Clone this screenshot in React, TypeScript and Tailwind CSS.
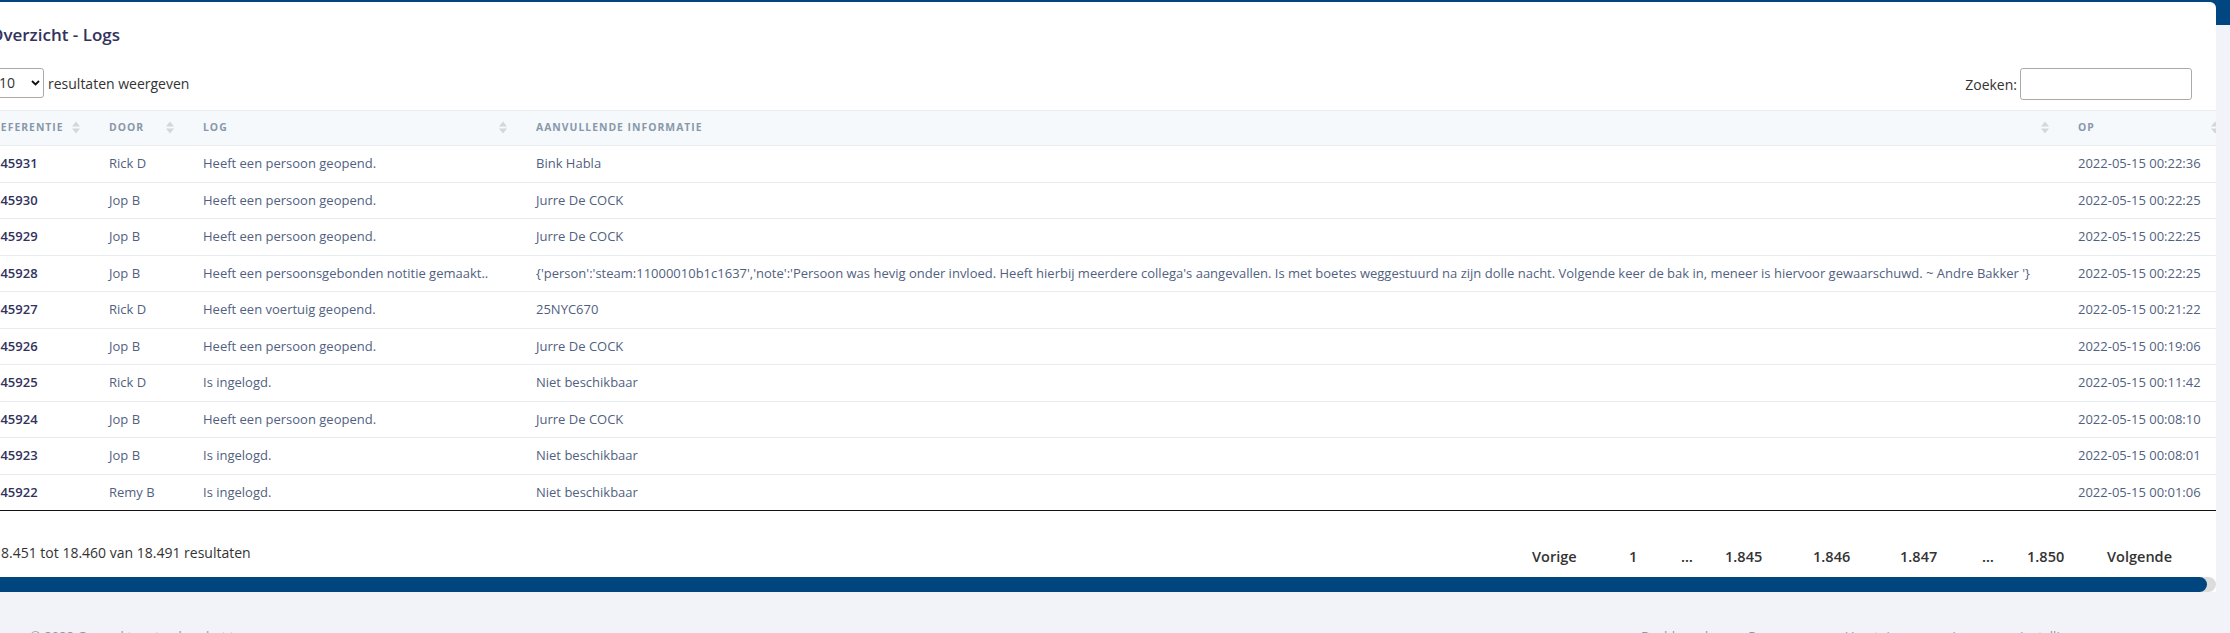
import React from "react";

interface LogRow {
  ref: string;
  door: string;
  log: string;
  info: string;
  op: string;
}

const NOTE =
  "{'person':'steam:11000010b1c1637','note':'Persoon was hevig onder invloed. Heeft hierbij meerdere collega's aangevallen. Is met boetes weggestuurd na zijn dolle nacht. Volgende keer de bak in, meneer is hiervoor gewaarschuwd. ~ Andre Bakker '}";

const rows: LogRow[] = [
  { ref: "145931", door: "Rick D", log: "Heeft een persoon geopend.", info: "Bink Habla", op: "2022-05-15 00:22:36" },
  { ref: "145930", door: "Jop B", log: "Heeft een persoon geopend.", info: "Jurre De COCK", op: "2022-05-15 00:22:25" },
  { ref: "145929", door: "Jop B", log: "Heeft een persoon geopend.", info: "Jurre De COCK", op: "2022-05-15 00:22:25" },
  { ref: "145928", door: "Jop B", log: "Heeft een persoonsgebonden notitie gemaakt..", info: NOTE, op: "2022-05-15 00:22:25" },
  { ref: "145927", door: "Rick D", log: "Heeft een voertuig geopend.", info: "25NYC670", op: "2022-05-15 00:21:22" },
  { ref: "145926", door: "Jop B", log: "Heeft een persoon geopend.", info: "Jurre De COCK", op: "2022-05-15 00:19:06" },
  { ref: "145925", door: "Rick D", log: "Is ingelogd.", info: "Niet beschikbaar", op: "2022-05-15 00:11:42" },
  { ref: "145924", door: "Jop B", log: "Heeft een persoon geopend.", info: "Jurre De COCK", op: "2022-05-15 00:08:10" },
  { ref: "145923", door: "Jop B", log: "Is ingelogd.", info: "Niet beschikbaar", op: "2022-05-15 00:08:01" },
  { ref: "145922", door: "Remy B", log: "Is ingelogd.", info: "Niet beschikbaar", op: "2022-05-15 00:01:06" },
];

// pagination items with the spacing of the original buttons
const pages = [
  { label: "Vorige", w: "w-[97px]" },
  { label: "1", w: "w-[52px]" },
  { label: "…", w: "w-[44px]" },
  { label: "1.845", w: "w-[88px]" },
  { label: "1.846", w: "w-[87px]" },
  { label: "1.847", w: "w-[82px]" },
  { label: "…", w: "w-[45px]" },
  { label: "1.850", w: "w-[80px]" },
  { label: "Volgende", w: "" },
];

// DataTables "sort both" arrows
const SortIcon = () => (
  <svg width="8" height="13" viewBox="0 0 8 13" className="shrink-0">
    <path d="M0 5.5 L4 0.5 L8 5.5 Z" fill="#d6d6d6" />
    <path d="M0 7.5 L4 12.5 L8 7.5 Z" fill="#d6d6d6" />
  </svg>
);

const HeadCell = ({ label }: { label: string }) => (
  <th className="h-[35px] pl-[24px] pr-[5px] p-0 text-left align-middle font-bold">
    <div className="flex items-center justify-between">
      <span>{label}</span>
      <SortIcon />
    </div>
  </th>
);

const App: React.FC = () => {
  return (
    <div className="w-[2230px] h-[633px] overflow-hidden bg-[#f2f3f8] font-['Open_Sans',sans-serif]">
      {/* blue header band */}
      <div className="h-[25px] bg-[#004680]" />

      {/* card */}
      <div className="-mt-[23px] -ml-[40px] w-[2256px] overflow-hidden rounded-tr-md bg-white">
        <h3 className="pl-[30px] pt-[20px] text-[17px] leading-[25px] font-semibold text-[#32325d]">
          Overzicht - Logs
        </h3>

        {/* length + filter */}
        <div className="mt-[21px] flex items-start justify-between pl-[34px] pr-[24px] text-[14px] text-[#333]">
          <label className="flex items-center gap-[4px]">
            <span className="flex h-[30px] w-[50px] items-center justify-between rounded-[3px] border border-[#aaa] bg-white pl-[4px] pr-[3px] leading-none">
              <span>10</span>
              <svg width="9" height="6" viewBox="0 0 9 6">
                <path d="M1 1 L4.5 4.5 L8 1" fill="none" stroke="#111" strokeWidth="1.8" />
              </svg>
            </span>
            <span>resultaten weergeven</span>
          </label>
          <label className="flex items-center gap-[3px]">
            <span>Zoeken:</span>
            <span className="block h-[32px] w-[172px] rounded-[3px] border border-[#aaa] bg-white" />
          </label>
        </div>

        {/* table */}
        <div className="ml-[9px] mt-[10px]">
          <table className="w-[2255px] table-fixed border-b border-[#111] whitespace-nowrap">
            <colgroup>
              <col className="w-[116px]" />
              <col className="w-[94px]" />
              <col className="w-[333px]" />
              <col className="w-[1542px]" />
              <col className="w-[170px]" />
            </colgroup>
            <thead>
              <tr className="border-y border-[#e9ecef] bg-[#f6f9fc] text-[10.4px] uppercase tracking-[1px] text-[#8898aa]">
                <HeadCell label="Referentie" />
                <HeadCell label="Door" />
                <HeadCell label="Log" />
                <HeadCell label="Aanvullende informatie" />
                <HeadCell label="Op" />
              </tr>
            </thead>
            <tbody className="text-[13px] leading-[19.5px] text-[#525f7f]">
              {rows.map((r, i) => (
                <tr key={r.ref} className={i === 0 ? "" : "border-t border-[#e9ecef]"}>
                  <td className="py-[8px] pl-[24px] font-semibold text-[#32325d]">{r.ref}</td>
                  <td className="py-[8px] pl-[24px]">{r.door}</td>
                  <td className="py-[8px] pl-[24px]">{r.log}</td>
                  <td className="py-[8px] pl-[24px]">{r.info}</td>
                  <td className="py-[8px] pl-[24px]">{r.op}</td>
                </tr>
              ))}
            </tbody>
          </table>
        </div>

        {/* info + pagination */}
        <div className="flex h-[66px] items-start justify-between pl-[33px] pr-[44px] text-[14px] leading-[21px] text-[#333]">
          <div className="pt-[31px]">18.451 tot 18.460 van 18.491 resultaten</div>
          <div className="flex items-center pt-[35px] text-[14.5px] leading-[21px] font-semibold text-[#333]">
            {pages.map((p, i) => (
              <span key={i} className={`shrink-0 ${p.w}`}>
                {p.label}
              </span>
            ))}
          </div>
        </div>

        {/* horizontal scrollbar of the responsive wrapper */}
        <div className="h-[15px] rounded-r-full bg-[#dcdcdc]">
          <div className="h-full w-[2247px] rounded-r-full bg-[#00457e]" />
        </div>
      </div>

      {/* footer (mostly below the fold) */}
      <div className="mt-[35px] flex justify-between px-[30px] text-[13px] leading-[19px] text-[#8898aa]">
        <div>
          © 2022 Gemaakt met <span className="text-[#f5365c]">♥</span> door het team
        </div>
        <div className="flex gap-[40px] pr-[110px]">
          <span>Dashboard</span>
          <span>Personen</span>
          <span>Voertuigen</span>
          <span>Logs</span>
          <span>Instellingen</span>
        </div>
      </div>
    </div>
  );
};

export default App;
